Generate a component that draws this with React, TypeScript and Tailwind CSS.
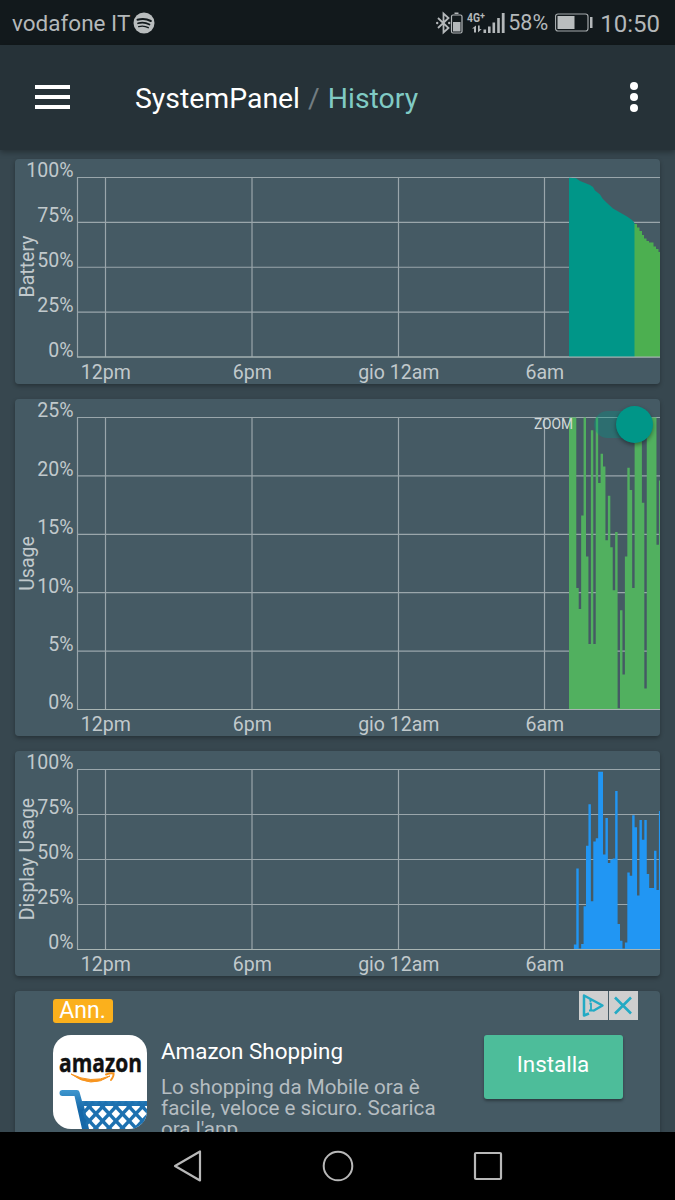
import React from 'react';

interface ChartProps {
  label: string;
  height: number;
  max: number;
  ticks: number[];
  labelY: number;
  values?: number[];
  color?: string;
  children?: React.ReactNode;
}

const STEP = 2.43;
const BARS_X = 554;
const TOP = 18.5;

const usage: number[] = [
  25, 25, 25, 10.4, 8.6, 16.6, 25, 13.1, 5.6, 23.9, 5.6, 25, 19.4, 21.9, 20.8, 14.5, 18.3, 13.9, 10.2,
  15.2, 0.1, 8.5, 3, 13.1, 20.7, 18.8, 10.4, 25, 25, 25, 17.7, 1.8, 25, 25, 25, 25, 14.1, 19.6,
];

const display: number[] = [
  0, 0, 2.8, 45, 0.5, 3, 24, 57.7, 80.7, 26.8, 60, 61.8, 98.8, 98.8, 52.8, 73, 48, 50, 50.6, 88, 14.1,
  4.8, 0.5, 3.9, 42.8, 41, 74.6, 67.9, 30, 72, 61, 72, 42, 34.2, 34.2, 54.9, 33, 77,
];

const hours = [
  { x: 90.5, text: '12pm' },
  { x: 237, text: '6pm' },
  { x: 383.5, text: 'gio 12am' },
  { x: 529.5, text: '6am' },
];

const Chart = ({ label, height, max, ticks, labelY, values, color, children }: ChartProps) => {
  const bottom = height - 26.5;
  const plot = bottom - TOP;
  const y = (v: number) => bottom - (v / max) * plot;

  return (
    <div className="overflow-hidden rounded bg-[#455a64]">
      <svg width="645" height={height} className="block" fontFamily="Roboto, sans-serif" fontSize="19.5" fill="#c1c9cc">
        <g stroke="#9aa6ab" strokeWidth="1.2">
          {ticks.map((t) => (
            <line key={t} x1="62" x2="645" y1={y(t)} y2={y(t)} />
          ))}
          <line x1="62.5" x2="62.5" y1={TOP} y2={bottom} />
          {hours.map((h) => (
            <line key={h.text} x1={h.x} x2={h.x} y1={TOP} y2={bottom} />
          ))}
        </g>
        {values && (
          <path
            fill={color}
            d={`M${BARS_X} ${bottom}${values
              .map((v, i) => `V${y(v)}H${BARS_X + (i + 1) * STEP}`)
              .join('')}V${bottom}Z`}
          />
        )}
        {children}
        <line x1="62" x2="645" y1={bottom} y2={bottom} stroke="#a9b5b3" strokeWidth="1" />
        {ticks.map((t) => (
          <text key={t} x="58.5" y={y(t) - 0.2} textAnchor="end">{t}%</text>
        ))}
        {hours.map((h) => (
          <text key={h.text} x={h.x + 0.3} y={bottom + 21.9} textAnchor="middle">{h.text}</text>
        ))}
        <text transform={`translate(18.5 ${labelY}) rotate(-90)`} textAnchor="middle">{label}</text>
      </svg>
    </div>
  );
};

// charging part in teal, discharging part in green
const BatteryArea = () => (
  <>
    <path fill="#4caf50" d="M619 198V65H622V68.5H624.5V72H627V76H629V79.5H631.5V82H634V83.5H638.5V87.5H641V90H643.5V93H645V198Z" />
    <path fill="#009688" d="M554 198V18.7L561 19.3L565 22L570 24L575 26L578 28L580 31.5L585 35.5L587.5 39.5L592 44L598 49.5L605 53.5L612 57.5L617 61L619.5 64V198Z" />
  </>
);

const StatusBar = () => (
  <div className="flex h-[45px] shrink-0 items-center justify-between bg-[#12191c] pl-3 pr-[15px] text-[#b4b8ba]">
    <div className="flex items-center gap-[3px] pt-px">
      <span className="text-[22.5px] leading-none pt-px">vodafone IT</span>
      <svg width="22" height="22" viewBox="0 0 22 22">
        <circle cx="11" cy="11" r="10.5" fill="#b9bdbe" />
        <g fill="none" stroke="#12191c" strokeLinecap="round">
          <path d="M4.5 7.8Q11.5 5.6 17.8 9" strokeWidth="2" />
          <path d="M5 11.3Q11 9.5 16.5 12.5" strokeWidth="1.7" />
          <path d="M5.7 14.6Q11 13.2 15.3 15.7" strokeWidth="1.4" />
        </g>
      </svg>
    </div>
    <div className="flex items-center">
      <svg width="76" height="26" viewBox="0 0 76 26">
        <g fill="none" stroke="#b4b8ba" strokeWidth="1.8">
          <path d="M2 8L12.5 18L7.5 22.5V3.5L12.5 8L2 18" />
          <rect x="15.5" y="5" width="10.5" height="18" rx="1.5" strokeWidth="1.2" />
        </g>
        <g fill="#b4b8ba">
          <circle cx="1.2" cy="13" r="1.2" />
          <circle cx="13.2" cy="13" r="1.2" />
          <rect x="18.5" y="2.5" width="4" height="1.5" />
          <rect x="17" y="12" width="7.5" height="9.5" />
          <rect x="47.5" y="19.5" width="2.6" height="3.5" />
          <rect x="52" y="16.5" width="2.6" height="6.5" />
          <rect x="56.500" y="12.5" width="2.6" height="10.5" />
          <rect x="61.200" y="8" width="2.6" height="15" />
          <rect x="65.8" y="3" width="2.8" height="20" />
          <path d="M40 16V22.5H38V18.5H36L40 15.5ZM42 15.5H43.7V19H45.7L42 22.5Z" />
        </g>
        <g fontFamily="Roboto, sans-serif" fontWeight="700" fill="#b4b8ba">
          <text x="31" y="12" fontSize="12" textLength="13" lengthAdjust="spacingAndGlyphs">4G</text>
          <text x="44" y="9" fontSize="9">+</text>
        </g>
      </svg>
      <span className="-ml-[4px] w-[41px] text-[21.5px] leading-none">58%</span>
      <svg width="39" height="20" viewBox="0 0 39 20" className="ml-[6px]">
        <rect x="0.5" y="1" width="32.5" height="17" rx="2.5" fill="none" stroke="#a4a9ab" strokeWidth="1.2" />
        <rect x="2.5" y="3" width="17" height="13" fill="#b9bdbe" />
        <rect x="35" y="4" width="2.5" height="11" fill="#b4b8ba" />
      </svg>
      <span className="ml-[6px] pt-0.5 text-[24px] leading-none">10:50</span>
    </div>
  </div>
);

const AppBar = () => (
  <header className="z-10 flex h-[105px] shrink-0 items-center bg-[#263238] pl-[35px] pr-[37px] shadow-[0_2px_6px_rgba(0,0,0,0.35)]">
    <div className="flex w-[35px] flex-col gap-[6px] pb-px">
      <span className="h-1 bg-white" />
      <span className="h-1 bg-white" />
      <span className="h-1 bg-white" />
    </div>
    <h1 className="ml-[65px] flex gap-2 pt-1 text-[28.4px] leading-none text-white">
      <span>SystemPanel</span>
      <span className="text-[#727d82]">/</span>
      <span className="text-[#80cbc4]">History</span>
    </h1>
    <div className="ml-auto flex flex-col gap-[3.3px] pb-px">
      <span className="size-2 rounded-full bg-white" />
      <span className="size-2 rounded-full bg-white" />
      <span className="size-2 rounded-full bg-white" />
    </div>
  </header>
);

const ZoomSwitch = () => (
  <div className="absolute right-[7px] top-[7px] flex items-center">
    <span className="pt-0.5 text-[13.8px] leading-none text-[#d3dadb]">ZOOM</span>
    <div className="relative ml-[21px] flex h-[37px] w-[59px] items-center justify-end">
      <span className="absolute left-0 h-[27px] w-[48px] rounded-full bg-[#009688]/35" />
      <span className="relative size-[37px] rounded-full bg-[#009688] shadow-[0_2px_4px_rgba(0,0,0,0.4)]" />
    </div>
  </div>
);

const AmazonIcon = () => (
  <svg width="94" height="94" viewBox="0 0 94 94" className="shrink-0">
    <defs>
      <clipPath id="tile"><rect width="94" height="94" rx="18" /></clipPath>
      <clipPath id="basket"><path d="M27 66H94V94H34Z" /></clipPath>
      <linearGradient id="cart" x1="0" y1="0" x2="0" y2="1">
        <stop offset="0" stopColor="#3f97cf" />
        <stop offset="0.5" stopColor="#1668a8" />
      </linearGradient>
    </defs>
    <g clipPath="url(#tile)">
      <rect width="94" height="94" fill="#fff" />
      <text x="6" y="36.5" fontFamily="'Open Sans', sans-serif" fontWeight="700" fontSize="25.5" fill="#111" stroke="#111" strokeWidth="0.4" textLength="83" lengthAdjust="spacingAndGlyphs">amazon</text>
      <path d="M18 39Q38 49 57 41Q38 54 18 39Z" fill="#f7941e" stroke="#f7941e" strokeWidth="1" strokeLinejoin="round" />
      <path d="M53 39.5Q58 37.5 60.5 38.5Q61 41 58 45" fill="none" stroke="#f7941e" strokeWidth="2" strokeLinecap="round" />
      <path d="M9.5 55H24Q26 55 26.5 57L29 66H94V71H31L36 94H29L21.5 61H9.5A3 3 0 0 1 9.5 55Z" fill="url(#cart)" />
      <g clipPath="url(#basket)" stroke="#1d71b0" strokeWidth="3.4">
        {[0, 1, 2, 3, 4, 5, 6, 7, 8, 9].map((i) => (
          <g key={i}>
            <line x1={i * 13.3 - 8} y1="67" x2={i * 13.3 + 20} y2="97" />
            <line x1={i * 13.3 + 14} y1="67" x2={i * 13.3 - 14} y2="97" />
          </g>
        ))}
      </g>
    </g>
  </svg>
);

const AdCard = () => (
  <div className="relative h-[160px] shrink-0 rounded bg-[#455a64] pl-[37.5px] pr-[37.5px] pt-[7.5px] shadow-[0_2px_4px_rgba(0,0,0,0.3)]">
    <span className="flex h-[24.5px] w-[60px] items-center justify-center rounded-[3px] bg-[#fbb01c] pb-px text-[23px] leading-none text-white">
      Ann.
    </span>
    <div className="mt-[11.5px] flex items-start">
      <AmazonIcon />
      <div className="ml-[14.5px] w-[300px] pt-[4.5px]">
        <h2 className="text-[22.4px] leading-6 text-white">Amazon Shopping</h2>
        <p className="mt-[13.5px] text-[20.6px] leading-[21px] text-[#b5bdc1]">
          Lo shopping da Mobile ora è<br />facile, veloce e sicuro. Scarica<br />ora l'app
        </p>
      </div>
      <button className="ml-auto h-[64px] w-[139px] shrink-0 rounded-[3px] bg-[#4dbd9a] pb-1 text-[22.4px] text-white shadow-[0_2px_3px_rgba(0,0,0,0.35)]">
        Installa
      </button>
    </div>
    <div className="absolute right-[22.5px] top-0 flex gap-[1.5px]">
      <svg width="28.5" height="28.5" viewBox="0 0 28.5 28.5" className="bg-[#cfcfcf]" fill="none" stroke="#23aac4" strokeWidth="2.5" strokeLinejoin="round">
        <path d="M10 22.5L5 24.5V4.5L23.5 14.5L14 20" />
        <path d="M10.5 12.5H12V19.5M10 19.5H14" strokeWidth="1.8" />
        <circle cx="11.5" cy="9.8" r="1.2" fill="#23aac4" stroke="none" />
      </svg>
      <svg width="28.5" height="28.5" viewBox="0 0 28.5 28.5" className="bg-[#cfcfcf]" stroke="#23aac4" strokeWidth="2.6">
        <path d="M6 6.5L22 22.5M22 6.5L6 22.5" />
      </svg>
    </div>
  </div>
);

const NavBar = () => (
  <nav className="flex h-[68px] shrink-0 items-center justify-center gap-[119px] bg-black">
    <svg width="30" height="34" viewBox="0 0 30 34" fill="none" stroke="#b8b8b8" strokeWidth="2.2" strokeLinejoin="round">
      <path d="M2 17L27 2.5V31.5Z" />
    </svg>
    <svg width="32" height="34" viewBox="0 0 32 34" fill="none" stroke="#b8b8b8" strokeWidth="2">
      <circle cx="16" cy="17" r="14.3" />
    </svg>
    <svg width="30" height="34" viewBox="0 0 30 34" fill="none" stroke="#b8b8b8" strokeWidth="2.2">
      <rect x="2" y="4" width="26" height="26" rx="1" />
    </svg>
  </nav>
);

export default function App() {
  return (
    <div className="flex h-[1200px] w-[675px] flex-col overflow-hidden bg-[#37474f] font-['Roboto',sans-serif]">
      <StatusBar />
      <AppBar />
      <main className="flex h-[982px] shrink-0 flex-col gap-[15.2px] overflow-hidden px-[15px] pt-[9px]">
        <div className="shrink-0 rounded shadow-[0_2px_4px_rgba(0,0,0,0.3)]">
          <Chart label="Battery" height={224.5} max={100} ticks={[100, 75, 50, 25, 0]} labelY={107.5}>
            <BatteryArea />
          </Chart>
        </div>
        <div className="relative shrink-0 rounded shadow-[0_2px_4px_rgba(0,0,0,0.3)]">
          <Chart
            label="Usage"
            height={337}
            max={25}
            ticks={[25, 20, 15, 10, 5, 0]}
            labelY={164.5}
            values={usage}
            color="#51b05f"
          />
          <ZoomSwitch />
        </div>
        <div className="shrink-0 rounded shadow-[0_2px_4px_rgba(0,0,0,0.3)]">
          <Chart
            label="Display Usage"
            height={225}
            max={100}
            ticks={[100, 75, 50, 25, 0]}
            labelY={108}
            values={display}
            color="#2196f3"
          />
        </div>
        <AdCard />
      </main>
      <NavBar />
    </div>
  );
}
